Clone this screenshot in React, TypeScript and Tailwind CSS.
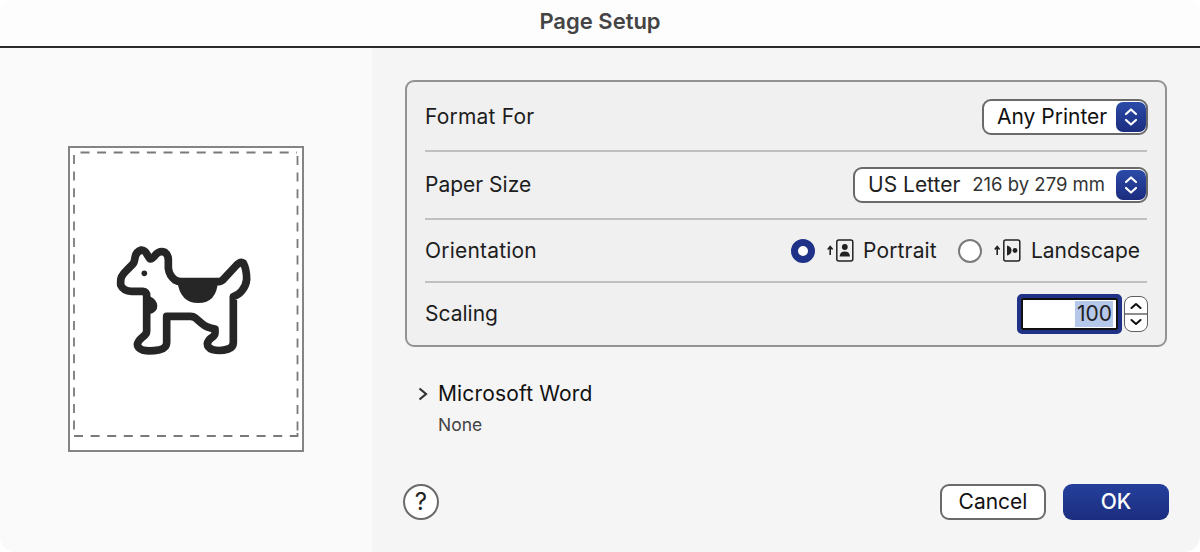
const Updown = () => (
  <svg width="30" height="30" viewBox="0 0 30 30" className="rounded-[7px] bg-gradient-to-b from-[#2b4ba8] to-[#1c2d7f]">
    <path d="M10 12 L15 7.5 L20 12 M10 18 L15 22.5 L20 18" fill="none" stroke="#fff" strokeWidth="2.2" strokeLinecap="round" strokeLinejoin="round" />
  </svg>
);

const Dog = () => (
  <svg width="170" height="135" viewBox="0 0 510 405" className="mb-[2px] mr-[3px]">
    <path
      d="M62 150 Q62 135 78 120 L98 100 Q103 95 105 80 Q108 62 124 57 Q135 57 141 70 L150 84 Q158 84 168 70 Q180 58 195 64 Q206 72 205 90 L205 112 Q208 135 225 147 Q232 152 245 152 L355 152 Q365 152 372 143 L410 102 Q422 90 430 96 Q440 115 440 145 Q438 165 425 180 Q415 192 400 197 L400 335 Q400 348 385 354 Q360 362 338 356 Q322 350 322 338 Q324 328 335 320 Q345 314 345 305 L345 294 Q320 290 305 277 L285 260 Q280 256 272 256 L200 256 L200 335 Q200 350 180 356 Q150 362 130 358 Q112 352 112 340 Q115 328 128 318 Q140 310 140 300 L140 195 Q140 182 128 181 L95 181 Q70 180 62 162 Z"
      fill="#fff"
      stroke="#262626"
      strokeWidth="23"
      strokeLinejoin="round"
    />
    <path d="M232 150 Q240 216 295 216 Q350 216 354 150 Z" fill="#262626" />
    <path d="M146 194 Q172 205 172 225 Q172 245 146 250 Z" fill="#262626" />
    <circle cx="133" cy="127" r="8.5" fill="#262626" />
  </svg>
);

const PageIcon = ({ landscape }: { landscape?: boolean }) => (
  <svg width="27" height="23" viewBox="0 0 27 23" className="shrink-0">
    <path d="M3.2 16 V8.5 M0.8 10.5 L3.2 7.5 L5.6 10.5" fill="none" stroke="#222" strokeWidth="1.6" />
    <rect x="9.8" y="1" width="16" height="21" rx="2" fill="none" stroke="#222" strokeWidth="1.5" />
    {landscape ? (
      <>
        <path d="M13 6.5 V16.5 Q17.5 15.5 17.5 11.5 Q17.5 7.5 13 6.5 Z" fill="#222" />
        <circle cx="21" cy="11.5" r="2.4" fill="#222" />
      </>
    ) : (
      <>
        <circle cx="17.8" cy="8" r="2.9" fill="#222" />
        <path d="M12.6 17.5 Q13 12.6 17.8 12.6 Q22.6 12.6 23 17.5 Z" fill="#222" />
      </>
    )}
  </svg>
);

const Sep = () => <div className="mx-[18px] h-[2px] bg-[#c0c0c0]" />;

export default function App() {
  return (
    <div className="h-[552px] w-[1200px] bg-white font-['Inter','Liberation_Sans',sans-serif] text-[#1d1d1d]">
      <div className="flex h-full flex-col overflow-hidden rounded-[16px] bg-[#f5f5f5]">
        <div className="flex h-[48px] shrink-0 items-center justify-center border-b-2 border-[#2b2b2b] bg-[#fdfdfd] pb-[3px] text-[22px] font-semibold text-[#444]">
          Page Setup
        </div>
        <div className="flex min-h-0 flex-1">
          <div className="w-[372px] shrink-0 bg-[#fafafa] pl-[68px] pt-[98px]">
            <div className="relative flex h-[306px] w-[236px] items-center justify-center border-2 border-[#848484] bg-white">
              <svg width="232" height="302" viewBox="0 0 232 302" className="absolute left-0 top-0">
                <g fill="none" stroke="#7a7a7a" strokeWidth="1.8" strokeDasharray="9 7.6">
                  <path d="M10.5 4.5 H227" />
                  <path d="M227.5 8 V284" />
                  <path d="M4 288 H226" />
                  <path d="M4 7 V284" />
                </g>
                <path d="M224 288 H227.5 V285" fill="none" stroke="#7a7a7a" strokeWidth="1.8" />
              </svg>
              <div className="relative flex">
                <Dog />
              </div>
            </div>
          </div>

          <div className="flex min-w-0 flex-1 flex-col pl-[33px] pr-[31px] pt-[32px]">
            <div className="mr-[2px] rounded-[9px] border-2 border-[#939393] bg-[#f0f0f0] text-[21px]">
              <div className="flex h-[68px] items-center justify-between pl-[18px] pr-[17px] pt-[2px]">
                <span className="tracking-[0.2px]">Format For</span>
                <div className="flex h-[36px] w-[166px] items-center justify-between rounded-[9px] border-2 border-[#6a6a6a] bg-white pl-[13px]">
                  <span className="text-[#111]">Any Printer</span>
                  <Updown />
                </div>
              </div>
              <Sep />
              <div className="flex h-[66px] items-center justify-between pl-[18px] pr-[17px]">
                <span>Paper Size</span>
                <div className="flex h-[36px] w-[295px] items-center rounded-[9px] border-2 border-[#6a6a6a] bg-white pl-[13px]">
                  <span className="text-[#222]">US Letter</span>
                  <span className="ml-[12px] text-[18.5px] text-[#333]">216 by 279 mm</span>
                  <div className="ml-auto flex">
                    <Updown />
                  </div>
                </div>
              </div>
              <Sep />
              <div className="flex h-[61px] items-center justify-between pl-[18px] pr-[25px]">
                <span className="tracking-[0.2px]">Orientation</span>
                <div className="flex items-center">
                  <span className="h-[24px] w-[24px] rounded-full border-[7px] border-[#1f3287] bg-white" />
                  <span className="ml-[12px] flex items-center">
                    <PageIcon />
                  </span>
                  <span className="ml-[9px] tracking-[0.15px]">Portrait</span>
                  <span className="ml-[21px] h-[24px] w-[24px] rounded-full border-2 border-[#7a7a7a] bg-white" />
                  <span className="ml-[12px] flex items-center">
                    <PageIcon landscape />
                  </span>
                  <span className="ml-[10px]">Landscape</span>
                </div>
              </div>
              <Sep />
              <div className="flex h-[62px] items-center justify-between pl-[18px] pr-[17px]">
                <span>Scaling</span>
                <div className="flex items-center gap-[2px]">
                  <div className="flex h-[40px] w-[105px] items-center justify-end rounded-[5px] border-[4px] border-[#1f3287] bg-white pr-[5px] shadow-[inset_0_0_0_2px_#111]">
                    <span className="bg-[#b6c8ea] pl-[2px] pr-[1px] leading-[26px] text-[#222]">100</span>
                  </div>
                  <div className="h-[36px] w-[24px] overflow-hidden rounded-[8px] border border-[#5f5f5f] bg-white">
                    <svg width="22" height="34" viewBox="0 0 22 34">
                      <path d="M6.5 11 L11 7 L15.5 11 M6.5 23 L11 27 L15.5 23" fill="none" stroke="#111" strokeWidth="2.1" strokeLinecap="round" strokeLinejoin="round" />
                      <path d="M0 17 H22" stroke="#666" strokeWidth="1.4" />
                    </svg>
                  </div>
                </div>
              </div>
            </div>

            <div className="ml-[13px] mt-[32px] flex items-center gap-[10px]">
              <svg width="10" height="14" viewBox="0 0 10 14" className="shrink-0">
                <path d="M1.5 1.5 L8 7 L1.5 12.5" fill="none" stroke="#333" strokeWidth="2.2" />
              </svg>
              <span className="text-[21px] leading-[30px] tracking-[0.15px] text-[#111]">Microsoft Word</span>
            </div>
            <div className="ml-[33px] mt-[4px] text-[17.5px] leading-[24px] text-[#444]">None</div>

            <div className="mt-[47px] flex items-center justify-between">
              <div className="-ml-[2px] flex h-[36px] w-[36px] items-center justify-center rounded-full border-2 border-[#6a6a6a] bg-white text-[24px] font-normal text-[#222]">
                ?
              </div>
              <div className="flex gap-[17px]">
                <div className="flex h-[36px] w-[106px] items-center justify-center rounded-[9px] border-2 border-[#6a6a6a] bg-white text-[21px] text-[#111]">
                  Cancel
                </div>
                <div className="flex h-[36px] w-[106px] items-center justify-center rounded-[9px] bg-gradient-to-b from-[#24409c] to-[#1c2d7f] text-[21px] font-medium text-white">
                  OK
                </div>
              </div>
            </div>
          </div>
        </div>
      </div>
    </div>
  );
}
